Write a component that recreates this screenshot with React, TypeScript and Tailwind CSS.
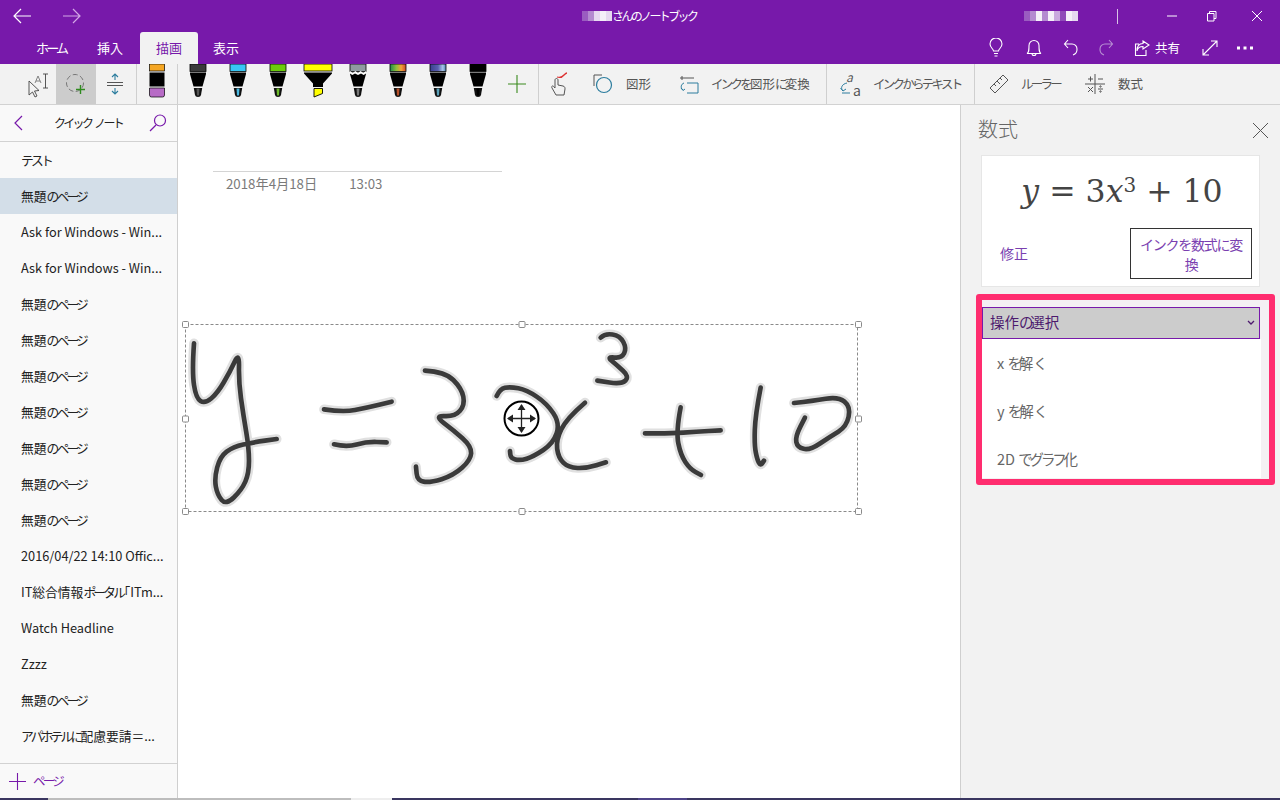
import React from "react";

const F = { fontFamily: '"Noto Sans CJK JP", "Noto Sans", sans-serif' };

function smooth(p: number[][]) {
  let d = `M${p[0][0]} ${p[0][1]}`;
  for (let i = 1; i < p.length - 1; i++) {
    const mx = (p[i][0] + p[i + 1][0]) / 2;
    const my = (p[i][1] + p[i + 1][1]) / 2;
    d += ` Q${p[i][0]} ${p[i][1]} ${mx} ${my}`;
  }
  const l = p[p.length - 1];
  return d + ` L${l[0]} ${l[1]}`;
}

// The reference's UI font has narrow kana: tighten only the kana runs of a string.
function J({ t }: { t: string }) {
  return (
    <>
      {t.split(/([\u3040-\u30ff]+|\u300c)/).map((s, i) =>
        i % 2 === 1 ? <span key={i} className={s === "「" ? "-ml-[0.45em]" : "tracking-[-0.22em]"}>{s}</span> : s
      )}
    </>
  );
}

const leftInk = [
  [[42,85],[36,170],[48,250],[75,266],[112,235],[150,170],[178,110],[176,200],[190,300],[207,400],[207,475],[185,525],[138,570],[112,540],[103,490],[120,425],[160,395],[220,382],[290,372]],
  [[432,283],[490,292],[560,278],[635,260]],
  [[462,388],[500,397],[560,380],[620,382]],
  [[735,167],[795,170],[845,220],[855,270],[825,305],[762,302],[820,345],[875,395],[872,435],[820,482],[750,503],[712,497],[708,455]],
];
const rightInk = [
  [[-40,243],[-30,222],[0,215],[50,225],[110,265],[150,325],[130,385],[70,425],[30,437],[2,430],[0,408]],
  [[225,263],[170,310],[138,375],[145,428],[175,458],[230,460],[288,442]],
  [[272,68],[285,55],[330,62],[350,100],[335,130],[290,125],[320,150],[358,185],[335,208],[262,197]],
  [[405,355],[480,356],[560,350],[632,346]],
  [[512,277],[498,350],[512,420],[540,462],[573,480]],
  [[752,218],[736,300],[733,390],[742,435],[752,452],[762,437]],
  [[852,264],[910,258],[985,245],[1022,275],[1010,335],[960,365],[900,406],[862,397],[856,365],[885,308]],
];

function Ink() {
  return (
    <svg className="absolute left-0 top-0 pointer-events-none" width="782" height="693" viewBox="178 105 782 693" fill="none">
      {[0, 1].map((pass) => (
        <g key={pass} stroke={pass === 0 ? "#e0e0e0" : "#3a3a3a"} strokeLinecap="round" strokeLinejoin="round">
          <g transform="translate(180 315) scale(.3333)" strokeWidth={pass === 0 ? 29 : 14}>
            {leftInk.map((p, i) => <path key={i} d={smooth(p)} />)}
          </g>
          <g transform="translate(510 315) scale(.3333)" strokeWidth={pass === 0 ? 29 : 14}>
            {rightInk.map((p, i) => <path key={i} d={smooth(p)} />)}
          </g>
        </g>
      ))}
      <rect x="185.5" y="324.5" width="672" height="187" stroke="#8a8a8a" strokeDasharray="3 2" />
      {[[185,324],[521.5,324],[858,324],[185,418.5],[858,418.5],[185,511],[521.5,511],[858,511]].map(([x,y],i)=>(
        <rect key={i} x={x-2.5} y={y-2.5} width="6" height="6" rx="1" fill="#fff" stroke="#8a8a8a" />
      ))}
      <circle cx="521.5" cy="418.5" r="17" fill="#fff" stroke="#000" strokeWidth="2" />
      <path d="M521.5 405v27M508 418.5h27" stroke="#222" strokeWidth="1.3" />
      <path d="M521.5 404l-4 6h8zM521.5 433l-4-6h8zM507 418.5l6-4v8zM536 418.5l-6-4v8z" fill="#222" />
    </svg>
  );
}

function Mosaic({ cells }: { cells: string[] }) {
  return (
    <div className="flex h-2.5 items-stretch shrink-0">
      {cells.map((c, i) => <div key={i} className="w-1.5" style={{ background: c }} />)}
    </div>
  );
}

function Pen({ band, tip, wide, jag }: { band: string; tip: string; wide?: boolean; jag?: boolean }) {
  if (wide) {
    return (
      <svg width="30" height="40" viewBox="0 0 30 40" className="shrink-0">
        <rect x="1" y="0" width="28" height="7" fill={band} stroke="#000" strokeWidth=".8" />
        <path d="M1 8.500h28v1l-9 10v3.500H10v-3.500l-9-10z" fill="#000" />
        <path d="M11 24.500h8.500v5l-8.500 3.500z" fill={band} stroke="#000" strokeWidth=".9" />
      </svg>
    );
  }
  return (
    <svg width="30" height="40" viewBox="0 0 30 40" className="shrink-0">
      <rect x="7" y="0" width="16" height="7.500" fill={band} stroke="#000" strokeWidth=".8" />
      <path d="M7 8.500h16v1.500L19.500 22.500h-9L7 10z" fill="#000" />
      {jag && <path d="M7 7l2.700 2 2.700-2 2.600 2 2.600-2 2.700 2L23 7v2.500l-2.300 1.500-2.700-1.500-3 1.500-3-1.500-2.700 1.500L7 9.500z" fill="#fff" />}
      <path d="M10.800 24h8.400L18 31q-.4 2-3 2t-3-2z" fill="#111" />
      <path d="M13.500 24.500h3L16 31.500h-2z" fill={tip} />
    </svg>
  );
}

function T({ t, className = "" }: { t: string; className?: string }) {
  return <span className={`text-[12.5px] text-[#555] whitespace-nowrap ${className}`}><J t={t} /></span>;
}

const pages = ["テスト","無題のページ","Ask for Windows - Win...","Ask for Windows - Win...","無題のページ","無題のページ","無題のページ","無題のページ","無題のページ","無題のページ","無題のページ","2016/04/22 14:10 Offic...","IT総合情報ポータル「ITm...","Watch Headline","Zzzz","無題のページ","アパホテルに配慮要請＝..."];

export default function App() {
  return (
    <div className="w-[1280px] h-[800px] overflow-hidden flex flex-col bg-white" style={F}>
      {/* title bar */}
      <div className="h-8 bg-[#7719aa] flex items-center text-white shrink-0">
        <svg width="20" height="16" viewBox="0 0 20 16" className="ml-[13px]" fill="none" stroke="#fff" strokeWidth="1.2"><path d="M1 8h17M8 1L1 8l7 7" /></svg>
        <svg width="20" height="16" viewBox="0 0 20 16" className="ml-7" fill="none" stroke="#d3a8e6" strokeWidth="1.2"><path d="M19 8H2M12 1l7 7-7 7" /></svg>
        <div className="ml-[501px] flex items-center w-[114px]">
          <Mosaic cells={["#9a5cc0","#b48ad0","#e6d8f0","#f4eff8","#e6d8f0"]} />
          <span className="text-[12px] whitespace-nowrap"><J t="さんのノートブック" /></span>
        </div>
        <div className="ml-[328px]"><Mosaic cells={["#9a5cc0","#b48ad0","#f4eff8","#b48ad0","#f4eff8","#c9a8de","#8f4bb8","#f4eff8","#e6d8f0"]} /></div>
        <div className="ml-[39px] w-px h-[15px] bg-[#d9c2e6]" />
        <svg width="12" height="12" viewBox="0 0 12 12" className="ml-[48px]" stroke="#fff" fill="none"><path d="M1 6h10" /></svg>
        <svg width="12" height="12" viewBox="0 0 12 12" className="ml-[27px]" stroke="#fff" fill="none"><path d="M2.500 3.500h6.500v7.500H2.500zM4.500 3.500V1.500H11v7H9" /></svg>
        <svg width="12" height="12" viewBox="0 0 12 12" className="ml-[34px]" stroke="#fff" fill="none"><path d="M1 1l10 10M11 1L1 11" /></svg>
      </div>
      {/* tabs */}
      <div className="h-8 bg-[#7719aa] flex items-stretch text-white text-[13px] shrink-0">
        <div className="w-[140px] flex">
          <span className="ml-[36px] self-center w-[61px]"><J t="ホーム" /></span>
          <span className="self-center">挿入</span>
        </div>
        <div className="w-[58px] bg-[#f2f2f2] rounded-t-[3px] text-[#7719aa] flex items-center justify-center">描画</div>
        <span className="ml-[15px] self-center">表示</span>
        <div className="ml-auto flex items-center">
          <svg width="14" height="20" viewBox="0 0 14 20" fill="none" stroke="#fff" strokeWidth="1.1" className="mr-[23px]"><path d="M4.500 13c0-2-3.500-3.500-3.500-7a6 6 0 0112 0c0 3.500-3.500 5-3.500 7zM5 15.500h4M5.500 18h3" /></svg>
          <svg width="16" height="20" viewBox="0 0 16 20" fill="none" stroke="#fff" strokeWidth="1.1" className="mr-[21px]"><path d="M1 15.500c2-1 2-3 2-8a5 5 0 0110 0c0 5 0 7 2 8zM6 15.500a2 2 0 004 0" /></svg>
          <svg width="16" height="18" viewBox="0 0 16 18" fill="none" stroke="#fff" strokeWidth="1.1" className="mr-[19px]"><path d="M5 1L1.500 5 5 9M1.500 5H9a5 5 0 015 5 6 6 0 01-4 6" /></svg>
          <svg width="16" height="18" viewBox="0 0 16 18" fill="none" stroke="#b78fd3" strokeWidth="1.1" className="mr-[20px]"><path d="M11 1l3.500 4L11 9M14.500 5H7a5 5 0 00-5 5 6 6 0 004 6" /></svg>
          <svg width="16" height="18" viewBox="0 0 16 18" fill="none" stroke="#fff" strokeWidth="1.1" className="mr-[5px]"><path d="M9 2l6 4-6 4V7.500C5 7.500 3.500 9.500 3 12 3 7 5 4.500 9 4.500zM12 11v5.500H1.500V5H5" /></svg>
          <span className="text-[12.5px] mr-[21px]">共有</span>
          <svg width="18" height="18" viewBox="0 0 18 18" fill="none" stroke="#fff" strokeWidth="1.1" className="mr-[18px]"><path d="M2 16L16 2M10 2h6v6M2 10v6h6" /></svg>
          <svg width="16" height="4" viewBox="0 0 16 4" fill="#fff" className="mr-[27px]"><rect x="0" y="0.500" width="3" height="3" /><rect x="6.500" y="0.500" width="3" height="3" /><rect x="13" y="0.500" width="3" height="3" /></svg>
        </div>
      </div>
      {/* toolbar */}
      <div className="h-[41px] bg-[#f2f2f2] border-b border-[#d2d2d2] flex items-stretch shrink-0">
        <div className="ml-[17px] w-[39px] flex items-center justify-center">
          <svg width="28" height="28" viewBox="0 0 28 28" fill="none" stroke="#444" strokeWidth=".9"><path d="M6 11l0 14 3.500-3 2.500 5 2-1-2.500-5 4.500-.5z" /><path d="M20 4h5M20 18h5M22.500 4v14" /><path d="M12 13l3-7 3 7M13 11h4" stroke="#777" /></svg>
        </div>
        <div className="w-[40px] bg-[#cccccc] flex items-center justify-center">
          <svg width="22" height="22" viewBox="0 0 22 22" fill="none"><circle cx="10" cy="10" r="8.500" stroke="#777" strokeDasharray="5 2.500" /><path d="M15.500 12v9M11 16.500h9" stroke="#2f8a1f" strokeWidth="1.400" /></svg>
        </div>
        <div className="w-[41px] border-r border-[#cfcfcf] flex items-center justify-center pr-[2px]">
          <svg width="18" height="22" viewBox="0 0 18 22" fill="none" stroke="#2c7d9e" strokeWidth="1.100"><path d="M1 9.500h16M1 12.500h16" stroke="#555" /><path d="M9 1v6M6 4l3-3 3 3M9 21v-6M6 18l3 3 3-3" /></svg>
        </div>
        <div className="w-[41px] border-r border-[#cfcfcf] flex items-start justify-center">
          <svg width="18" height="40" viewBox="0 0 18 40"><rect x="1.500" y="0" width="15" height="7" fill="#f5a623" stroke="#000" strokeWidth=".7" /><rect x="1.500" y="8.500" width="15" height="14" fill="#000" /><path d="M1.500 24h15v7a2 2 0 01-2 2h-11a2 2 0 01-2-2z" fill="#b76bc6" stroke="#000" strokeWidth=".7" /></svg>
        </div>
        <div className="w-[361px] border-r border-[#cfcfcf] flex items-start pl-[5px] gap-[10px]">
          <svg width="0" height="0" className="absolute">
            <defs>
              <linearGradient id="rainbow"><stop offset="0" stopColor="#1f8a4c" /><stop offset=".4" stopColor="#8fbf3a" /><stop offset=".7" stopColor="#f2a33a" /><stop offset="1" stopColor="#c94a2a" /></linearGradient>
              <linearGradient id="galaxy"><stop offset="0" stopColor="#3a3f8f" /><stop offset=".5" stopColor="#5a5fb0" /><stop offset=".8" stopColor="#a8c8e8" /><stop offset="1" stopColor="#4a7fb0" /></linearGradient>
            </defs>
          </svg>
          <Pen band="#3a3a3a" tip="#555" />
          <Pen band="#38c6f4" tip="#4ab8e0" />
          <Pen band="#6ccb0e" tip="#6ab82a" />
          <Pen band="#ffff00" tip="#ffff00" wide />
          <Pen band="#8f9aa0" tip="#777" jag />
          <Pen band="url(#rainbow)" tip="#b5502a" />
          <Pen band="url(#galaxy)" tip="#5aa0b8" />
          <Pen band="#000" tip="#000" />
          <svg width="18" height="18" viewBox="0 0 18 18" stroke="#3a8a1e" strokeWidth="1.100" className="self-center ml-[5px]"><path d="M9 0v18M0 9h18" /></svg>
        </div>
        <div className="w-[288px] border-r border-[#cfcfcf] flex items-center">
          <svg width="20" height="26" viewBox="0 0 20 26" fill="none" className="ml-[10px] shrink-0"><path d="M7 24l-4-7c-1-2 1-3 2-1l1 1V9c0-2 3-2 3 0v5l5 1c2 .5 2 2 2 3l-1 6z" stroke="#555" /><path d="M8 6c3 1 5 .5 7-2 1-1 2-2 3-2" stroke="#d33" strokeWidth="1.300" /></svg>
          <svg width="20" height="20" viewBox="0 0 20 20" fill="none" className="ml-[24px] shrink-0"><path d="M9 1H1v11" stroke="#555" /><circle cx="11" cy="11" r="7.500" stroke="#2c7d9e" strokeWidth="1.200" /></svg>
          <T t="図形" className="ml-[13px]" />
          <svg width="20" height="20" viewBox="0 0 20 20" fill="none" className="ml-[28px] shrink-0"><path d="M1 4h14M3 2v4" stroke="#555" /><path d="M8 9h11v10H8" stroke="#2c7d9e" /><path d="M5 9c-3 1-4 5-1 7M2 14l2 2.500L6 15" stroke="#2c7d9e" /></svg>
          <T t="インクを図形に変換" className="ml-[12px]" />
        </div>
        <div className="w-[148px] border-r border-[#cfcfcf] flex items-center">
          <svg width="24" height="36" viewBox="0 -4 24 36" fill="none" className="ml-[12px] shrink-0"><text x="7" y="12" fontSize="12" fontStyle="italic" fill="#555" stroke="none">a</text><text x="14" y="26" fontSize="14" fill="#555" stroke="none">a</text><path d="M8 13c-5 1-7 5-4 8M1.500 18l2.500 3 3-2M3 23h8" stroke="#2c7d9e" /></svg>
          <T t="インクからテキスト" className="ml-[10px]" />
        </div>
        <div className="flex items-center">
          <svg width="20" height="20" viewBox="0 0 20 20" fill="none" stroke="#555" className="ml-[14px] shrink-0"><path d="M1 14L14 1l5 5L6 19zM5 10l2 2M8 7l3 3M11 4l2 2" /></svg>
          <T t="ルーラー" className="ml-[12px]" />
          <svg width="20" height="20" viewBox="0 0 20 20" fill="none" stroke="#555" className="ml-[25px] shrink-0"><path d="M10 0v20M0 10h20M3 5h5M5.500 2.500v5M13 5h5M3 13l5 5M8 13l-5 5M13 15h5" /><circle cx="15.500" cy="12.500" r=".7" /><circle cx="15.500" cy="17.500" r=".7" /></svg>
          <T t="数式" className="ml-[13px]" />
        </div>
      </div>
      {/* body */}
      <div className="flex-1 flex min-h-0">
        <aside className="w-[178px] bg-[#f9f9f9] border-r border-[#cfcfcf] flex flex-col shrink-0">
          <div className="h-[37px] border-b border-[#d2d2d2] flex items-center pl-[13px] pr-[10px] shrink-0">
            <svg width="10" height="16" viewBox="0 0 10 16" fill="none" stroke="#7719aa" strokeWidth="1.200"><path d="M9 1L2 8l7 7" /></svg>
            <span className="flex-1 text-center text-[12px] text-[#222] pl-1"><J t="クイック ノート" /></span>
            <svg width="18" height="18" viewBox="0 0 18 18" fill="none" stroke="#7719aa" strokeWidth="1.200"><circle cx="11" cy="6.500" r="5.500" /><path d="M7 11l-6 6" /></svg>
          </div>
          <div className="flex-1 min-h-0 overflow-hidden">
            {pages.map((p, i) => (
              <div key={i} className={`h-9 pl-[21px] pb-px flex items-center text-[12.75px] text-[#222] whitespace-nowrap ${i === 1 ? "bg-[#d3dee8]" : ""}`}><span><J t={p} /></span></div>
            ))}
          </div>
          <div className="h-[35px] border-t border-[#d2d2d2] flex items-center pl-[9px] shrink-0">
            <svg width="17" height="17" viewBox="0 0 17 17" stroke="#7719aa" strokeWidth="1.100"><path d="M8.500 0v17M0 8.500h17" /></svg>
            <span className="ml-[7px] text-[12.5px] text-[#7719aa]"><J t="ページ" /></span>
          </div>
        </aside>
        <main className="relative flex-1 bg-white">
          <div className="ml-[35px] mt-[66px] w-[289px] border-t border-[#d4d4d4] pl-[13px] pt-[2px] flex text-[13.25px] text-[#7a7a7a]">
            <span>2018年4月18日</span>
            <span className="ml-[32px]">13:03</span>
          </div>
          <Ink />
        </main>
        <aside className="w-[320px] bg-[#f2f2f2] border-l border-[#cfcfcf] shrink-0 flex flex-col">
          <div className="h-[50px] flex items-center pl-[17px] pr-[12px] shrink-0">
            <span className="text-[20px] font-light text-[#666] leading-none -mt-[2px]">数式</span>
            <svg width="15" height="15" viewBox="0 0 15 15" className="ml-auto" stroke="#555" fill="none"><path d="M0 0l15 15M15 0L0 15" /></svg>
          </div>
          <div className="ml-[20px] w-[279px] h-[132px] bg-white border border-[#e6e6e6] flex flex-col shrink-0">
            <div className="text-center text-[31.5px] leading-none text-[#444] mt-[20px] pl-[3px] whitespace-nowrap" style={{ fontFamily: '"DejaVu Serif", "Liberation Serif", serif' }}>
              <i>y</i> = 3<i>x</i><sup className="text-[20px]">3</sup> + 10
            </div>
            <div className="flex items-center mt-auto mb-[7px] pl-[18px] pr-[7px] justify-between">
              <span className="text-[14px] text-[#7a3fb0]">修正</span>
              <div className="w-[122px] h-[51px] border border-[#333] text-[14px] leading-[20px] tracking-[-0.09em] text-[#7a3fb0] text-center flex items-center justify-center px-1">インクを数式に変換</div>
            </div>
          </div>
          <div className="ml-[15px] mt-[7px] w-[299px] h-[191px] border-[6px] border-[#ff2d6f] rounded-[3px] pt-[7px] bg-[#f4f0f3] shrink-0 overflow-hidden">
            <div className="h-[32px] w-[278px] bg-[#cccccc] border border-[#7719aa] flex items-center pl-[7px] pr-[4px] text-[14.5px] text-[#4d1a6e]">
              <span className="-mt-[2px]"><J t="操作の選択" /></span>
              <svg width="8" height="6" viewBox="0 0 8 6" fill="none" stroke="#4d1a6e" strokeWidth="1.300" className="ml-auto"><path d="M1 1l3 3 3-3" /></svg>
            </div>
            <div className="w-[279px] bg-white h-[139px] overflow-hidden pl-[15px] text-[14.5px] text-[#666]">
              <div className="h-12 flex items-center"><span><J t="x を解く" /></span></div>
              <div className="h-12 flex items-center"><span><J t="y を解く" /></span></div>
              <div className="h-12 flex items-center"><span><J t="2D でグラフ化" /></span></div>
            </div>
          </div>
        </aside>
      </div>
      <div className="h-0.5 flex shrink-0">
        <div className="w-[48px] bg-[#3a3660]" />
        <div className="w-[303px] bg-[#bdbdbd]" />
        <div className="w-[41px] bg-[#eeeeee]" />
        <div className="w-[246px] bg-[#3a3660]" />
        <div className="w-[49px] bg-[#4f4488]" />
        <div className="flex-1 bg-[#3a3660]" />
      </div>
    </div>
  );
}
